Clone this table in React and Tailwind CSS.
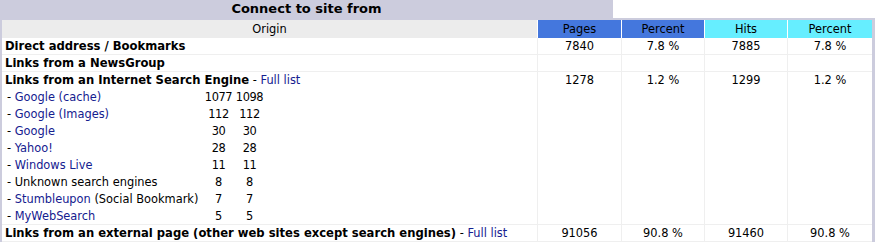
import React from "react";

const font = { fontFamily: '"DejaVu Sans", Verdana, sans-serif' };

const engines = [
  { name: "Google (cache)", link: true, pages: 1077, hits: 1098 },
  { name: "Google (Images)", link: true, pages: 112, hits: 112 },
  { name: "Google", link: true, pages: 30, hits: 30 },
  { name: "Yahoo!", link: true, pages: 28, hits: 28 },
  { name: "Windows Live", link: true, pages: 11, hits: 11 },
  { name: "Unknown search engines", link: false, pages: 8, hits: 8 },
  { name: "Stumbleupon", extra: " (Social Bookmark)", link: true, pages: 7, hits: 7 },
  { name: "MyWebSearch", link: true, pages: 5, hits: 5 },
];

const Link = ({ children }) => (
  <a href="#" className="text-[#14208f] no-underline">
    {children}
  </a>
);

const Nums = ({ values }) =>
  values.map((v, i) => (
    <div key={i} className="bg-white text-center pt-px leading-[15px]">
      {v}
    </div>
  ));

const App = () => {
  return (
    <div className="w-[875px] h-[243px] bg-white text-[11.4px] text-black overflow-hidden" style={font}>
      {/* title */}
      <div className="flex">
        <div className="w-[613px] h-[18px] bg-[#ccccdd] text-center text-[13px] font-bold leading-[18px]">
          Connect to site from
        </div>
      </div>

      {/* border box */}
      <div className="bg-[#ccccdd] px-[2px] pt-[2px] pr-[3px]">
        {/* header */}
        <div className="grid grid-cols-[535px_83px_82px_82px_84px] gap-x-px bg-white">
          <div className="bg-[#ececec] h-[18px] pt-px leading-[17px] text-center">Origin</div>
          <div className="bg-[#4477dd] h-[18px] pt-px leading-[17px] text-center">Pages</div>
          <div className="bg-[#4477dd] h-[18px] pt-px leading-[17px] text-center">Percent</div>
          <div className="bg-[#66eeff] h-[18px] pt-px leading-[17px] text-center">Hits</div>
          <div className="bg-[#66eeff] h-[18px] pt-px leading-[17px] text-center">Percent</div>
        </div>

        {/* body */}
        <div className="grid grid-cols-[535px_83px_82px_82px_84px] gap-px bg-[#efefef] pb-px">
          <div className="bg-white pl-[3px] pt-px font-bold text-[11.6px] leading-[15px]">Direct address / Bookmarks</div>
          <Nums values={["7840", "7.8 %", "7885", "7.8 %"]} />

          <div className="bg-white pl-[3px] pt-px font-bold text-[11.6px] leading-[15px]">Links from a NewsGroup</div>
          <Nums values={["", "", "", ""]} />

          <div className="bg-white pl-[3px]">
            <div className="pt-px leading-[15px]">
              <span className="font-bold text-[11.6px]">Links from an Internet Search Engine</span> - <Link>Full list</Link>
            </div>
            {engines.map((e) => (
              <div key={e.name} className="grid grid-cols-[198px_31px_31px] h-[17px] pt-[2px] leading-[15px]">
                <div className="pl-[2px] whitespace-nowrap">
                  - {e.link ? <Link>{e.name}</Link> : e.name}
                  {e.extra}
                </div>
                <div className="text-center tracking-[-0.4px]">{e.pages}</div>
                <div className="text-center tracking-[-0.4px]">{e.hits}</div>
              </div>
            ))}
          </div>
          <Nums values={["1278", "1.2 %", "1299", "1.2 %"]} />

          <div className="bg-white pl-[3px] pt-px leading-[15px] whitespace-nowrap">
            <span className="font-bold text-[11.6px]">Links from an external page (other web sites except search engines)</span> -{" "}
            <Link>Full list</Link>
          </div>
          <Nums values={["91056", "90.8 %", "91460", "90.8 %"]} />
        </div>
      </div>
    </div>
  );
};

export default App;
